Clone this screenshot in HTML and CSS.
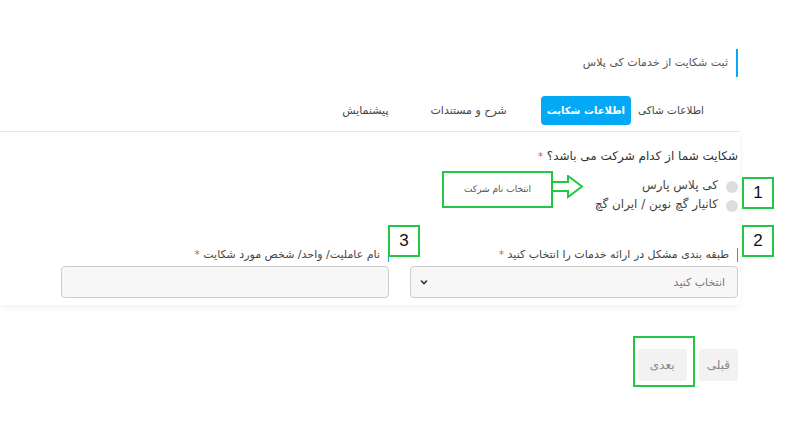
FILE: index.html
```html
<!DOCTYPE html>
<html lang="fa" dir="rtl">
<head>
    <meta charset="UTF-8">
    <title>ثبت شکایت</title>
    <link rel="stylesheet" href="styles.css">
</head>
<body>
    <div class="page">
        <div class="head">
            <h1 class="title">ثبت شکایت از خدمات کی پلاس</h1>
        </div>

        <ul class="tabs">
            <li class="tab first">اطلاعات شاکی</li>
            <li class="tab active">اطلاعات شکایت</li>
            <li class="tab">شرح و مستندات</li>
            <li class="tab">پیشنمایش</li>
        </ul>

        <form class="card">
            <p class="question">شکایت شما از کدام شرکت می باشد؟ <span class="req">*</span></p>
            <label class="radio"><span class="dot"></span>کی پلاس پارس</label>
            <label class="radio"><span class="dot"></span>کانیار گچ نوین / ایران گچ</label>

            <div class="fields">
                <div class="field">
                    <span class="label">طبقه بندی مشکل در ارائه خدمات را انتخاب کنید <span class="req">*</span></span>
                    <div class="select">
                        <span>انتخاب کنید</span>
                        <svg width="10" height="8" viewBox="0 0 10 8"><path d="M2 2.5 L5 5.5 L8 2.5" fill="none" stroke="#333" stroke-width="1.6"/></svg>
                    </div>
                </div>
                <div class="field">
                    <span class="label">نام عاملیت/ واحد/ شخص مورد شکایت <span class="req">*</span></span>
                    <div class="input"></div>
                </div>
            </div>
        </form>

        <div class="actions">
            <button type="button" class="btn">قبلی</button>
            <button type="button" class="btn">بعدی</button>
        </div>

        <!-- annotations -->
        <div class="note num n1">1</div>
        <div class="note num n2">2</div>
        <div class="note num n3">3</div>
        <div class="note hint">انتخاب نام شرکت</div>
        <svg class="arrow" width="34" height="24" viewBox="0 0 34 24">
            <polygon points="1,7 17,7 17,1 31,11.5 17,22 17,16 1,16" fill="#fff" stroke="#22c746" stroke-width="2"/>
        </svg>
        <div class="note next-mark"></div>
    </div>
</body>
</html>
```

FILE: styles.css
```css
*{
    box-sizing: border-box;
}
body{
    margin: 0;
    background-color: #fff;
    font-family: "DejaVu Sans", sans-serif;
    color: #333;
}
.page{
    position: relative;
    width: 801px;
    height: 426px;
    direction: rtl;
}
.head{
    padding-top: 49px;
    margin-right: 63px;
}
.title{
    margin: 0;
    height: 28px;
    line-height: 28px;
    width: 738px;
    border-right: 2px solid #03a9f4;
    padding-right: 8px;
    font-size: 11px;
    font-weight: normal;
    color: #555;
}
.tabs{
    display: flex;
    gap: 26px;
    list-style: none;
    margin: 19px 63px 6px 0;
    padding: 0 26px 0 0;
    width: 738px;
}
.tab{
    height: 29px;
    line-height: 29px;
    padding: 0 8px;
    font-size: 11px;
    color: #444;
    border-radius: 4px;
}
.tab.first{
    margin-left: -27px;
    font-size: 10.5px;
}
.tab.active{
    padding: 0 6px;
    background-color: #03a9f4;
    color: #fff;
    font-size: 10px;
    font-weight: bold;
}
.card{
    width: 740px;
    margin: 0 61px 0 0;
    padding: 14px 2px 7px 0;
    border-top: 1px solid #e6e6e6;
    box-shadow: 0 3px 8px rgba(0, 0, 0, 0.05);
}
.question{
    margin: 0 0 8px 0;
    line-height: 20px;
    font-size: 12px;
    color: #333;
}
.req{
    color: #d9534f;
    font-size: 10px;
}
.radio{
    display: flex;
    align-items: center;
    gap: 8px;
    height: 19px;
    font-size: 12px;
    color: #444;
}
.dot{
    width: 12px;
    height: 12px;
    border-radius: 50%;
    background-color: #ddd;
    margin-top: 4px;
}
.fields{
    display: grid;
    grid-template-columns: 328px 328px;
    gap: 21px;
    margin-top: 35px;
}
.field{
    display: flex;
    flex-direction: column;
    gap: 4px;
}
.label{
    align-self: flex-start;
    line-height: 14px;
    border-right: 1px solid #03a9f4;
    padding-right: 8px;
    font-size: 11px;
    color: #444;
}
.select, .input{
    height: 32px;
    border: 1px solid #ccc;
    border-radius: 4px;
    background-color: #f7f7f7;
}
.select{
    display: flex;
    align-items: center;
    justify-content: space-between;
    padding: 0 12px 0 8px;
    font-size: 11px;
    color: #777;
}
.actions{
    display: flex;
    gap: 12px;
    margin: 44px 63px 0 0;
}
.btn{
    height: 32px;
    padding: 0 8px;
    border: none;
    border-radius: 3px;
    background-color: #f2f2f2;
    color: #888;
    font-family: "DejaVu Sans", sans-serif;
    font-size: 12px;
}
.btn + .btn{
    padding: 0 12px;
}
.note{
    position: absolute;
    border: 2px solid #22c746;
    background-color: #fff;
}
.num{
    width: 32px;
    height: 32px;
    line-height: 28px;
    text-align: center;
    font-family: "Liberation Sans", sans-serif;
    font-size: 17px;
    color: #111;
}
.n1{
    left: 742px;
    top: 177px;
}
.n2{
    left: 742px;
    top: 225px;
}
.n3{
    left: 388px;
    top: 225px;
}
.hint{
    left: 442px;
    top: 171px;
    width: 111px;
    height: 37px;
    line-height: 32px;
    text-align: center;
    font-size: 9px;
    color: #555;
}
.arrow{
    position: absolute;
    left: 551px;
    top: 175px;
}
.next-mark{
    left: 633px;
    top: 336px;
    width: 62px;
    height: 51px;
    background: transparent;
}
```
